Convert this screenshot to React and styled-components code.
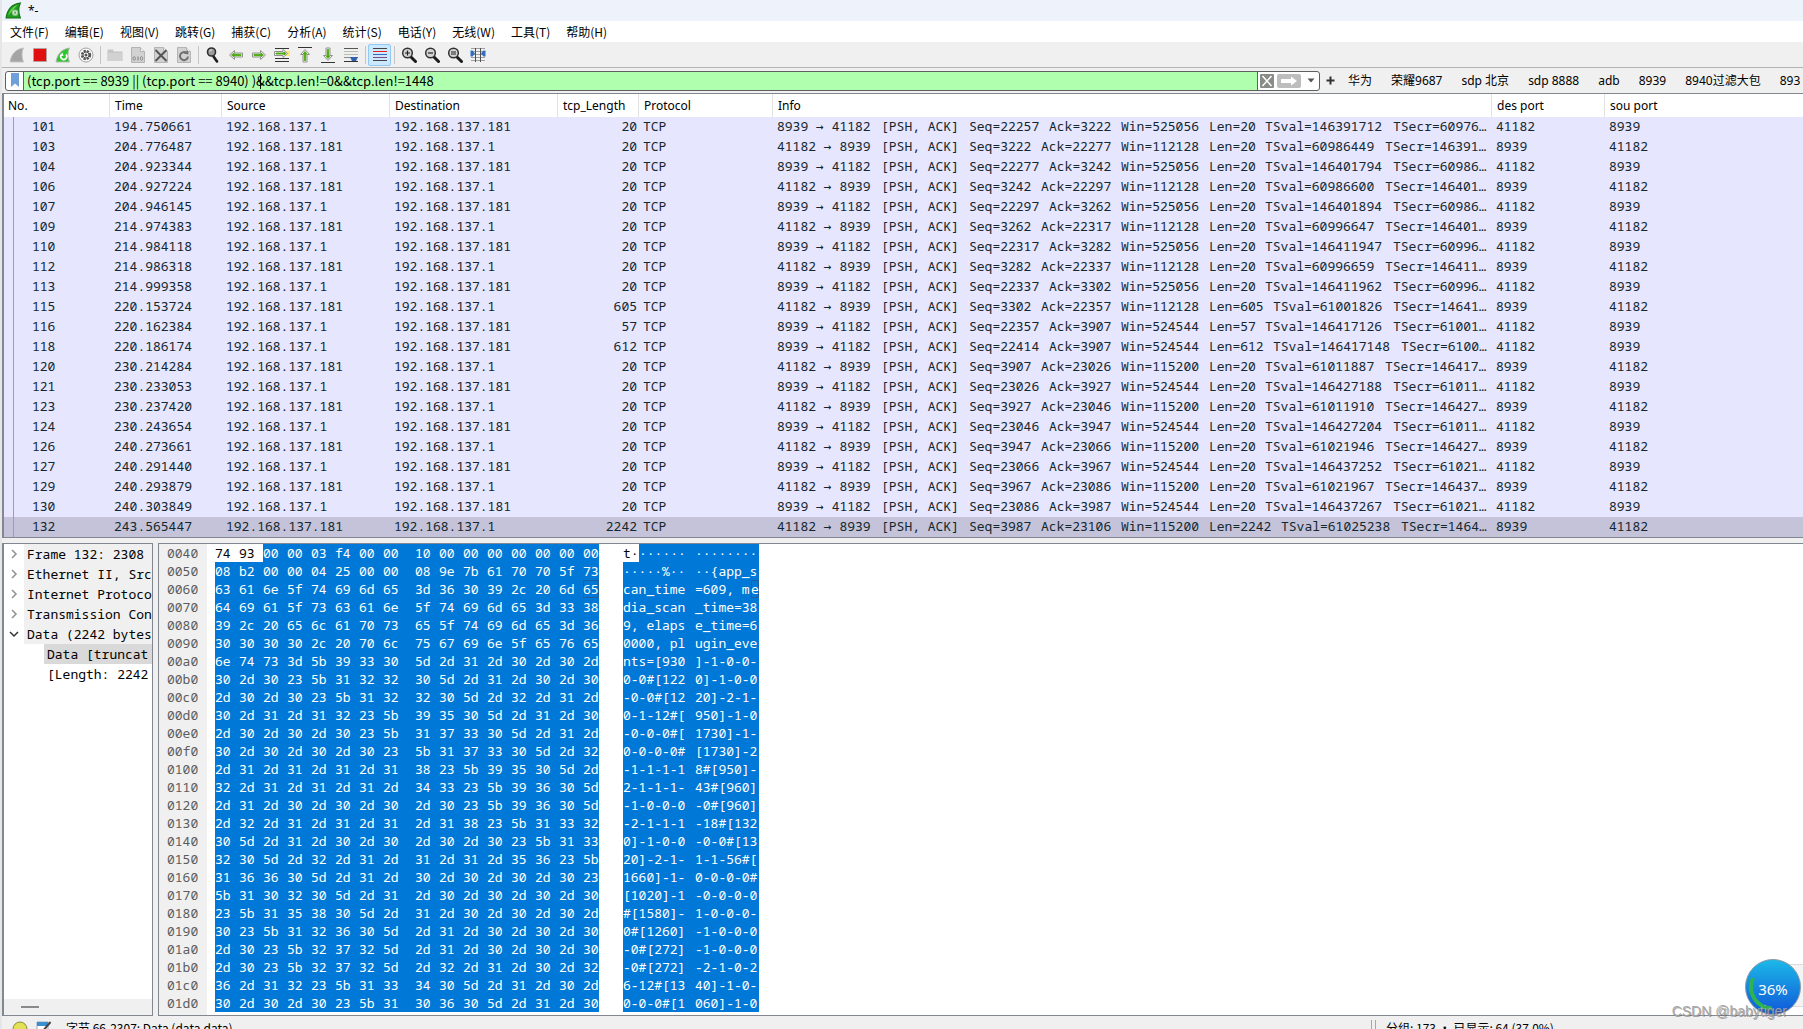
import React from "react";
import styled, { createGlobalStyle, css } from "styled-components";

const UI = '"Noto Sans", "Noto Sans CJK SC", sans-serif';
const CJK = '"Noto Sans CJK SC", "Noto Sans", sans-serif';
const MONO = '"Noto Sans Mono", "DejaVu Sans Mono", "Liberation Mono", monospace';
const EDGE = "#828790";
const FACE = "#f0f0f0";
const ACCENT = "#0078d7";

const GlobalStyle = createGlobalStyle`
  * { box-sizing: border-box; }
  body { margin: 0; background: ${FACE}; color: #000; font: 12px/16px ${UI}; overflow: hidden; }
  button, input { font: inherit; color: inherit; margin: 0; }
`;

const Window = styled.div`
  display: flex;
  flex-direction: column;
  height: 100vh;
  overflow: hidden;
  border-left: 2px solid #e4e6e8;
  position: relative;
`;

const TitleBar = styled.header`
  display: flex;
  align-items: center;
  gap: 6px;
  height: 21px;
  flex: none;
  padding-left: 3px;
  background: #edf2fb;
`;

const MenuBar = styled.nav`
  display: flex;
  gap: 16px;
  flex: none;
  height: 21px;
  padding-left: 8px;
  background: #fff;
  font-family: ${CJK};
`;

const MenuItem = styled.button`
  border: 0;
  padding: 0;
  background: none;
  line-height: 20px;
  white-space: nowrap;
`;

const ToolBar = styled.div`
  display: flex;
  align-items: center;
  flex: none;
  height: 26px;
  padding-left: 3px;
  border-bottom: 1px solid #b4b4b4;
`;

const ToolButton = styled.button`
  display: grid;
  place-items: center;
  width: 23px;
  height: 22px;
  padding: 0;
  border: 1px solid transparent;
  border-radius: 2px;
  background: none;
  ${(p) => p.$active && css`
    background: #cce8ff;
    border-color: #90c8f6;
  `}
`;

const ToolDivider = styled.span`
  width: 6px;
  height: 18px;
  background: linear-gradient(#c6c6c6, #c6c6c6) center / 1px 100% no-repeat;
`;

const FilterBar = styled.form`
  display: flex;
  align-items: center;
  flex: none;
  height: 25px;
  padding-left: 3px;
`;

const FilterBox = styled.div`
  display: flex;
  align-items: stretch;
  flex: 0 1 1315px;
  height: 20px;
  border: 1px solid #606060;
  border-radius: 3px;
  background: #fff;
  overflow: hidden;
`;

const FilterField = styled.div`
  flex: 1;
  display: flex;
  position: relative;
  border: solid #606060;
  border-width: 0 1px;
`;

const FilterInput = styled.input`
  flex: 1;
  min-width: 0;
  border: 0;
  outline: 0;
  padding: 0 0 0 3px;
  background: #afffaf;
  font: 13px/18px ${CJK};
`;

const Caret = styled.i`
  position: absolute;
  left: 236px;
  top: 2px;
  width: 1px;
  height: 15px;
  background: #000;
`;

const FilterButton = styled.button`
  display: grid;
  place-items: center;
  width: ${(p) => p.$w}px;
  padding: 0;
  border: 0;
  background: none;
`;

const SavedFilters = styled.div`
  display: flex;
  flex: 1 0 0;
  min-width: 0;
  gap: 19px;
  overflow: hidden;
  padding-left: 8px;
`;

const SavedFilter = styled.button`
  border: 0;
  padding: 0;
  background: none;
  white-space: nowrap;
  line-height: 20px;
  flex: none;
`;

const PacketPane = styled.section`
  flex: none;
  border: solid ${EDGE};
  border-width: 1px 0 1px 2px;
  background: #fff;
`;

const PacketTable = styled.table`
  width: 100%;
  table-layout: fixed;
  border-collapse: separate;
  border-spacing: 0;
`;

const HeadCell = styled.th`
  height: 23px;
  padding: 0 0 0 5px;
  border-right: 1px solid #e2e2e2;
  text-align: left;
  font: 12px/22px ${UI};
  white-space: nowrap;
  &:first-child { padding-left: 4px; }
  &:last-child { border-right: 0; }
`;

const PacketRow = styled.tr`
  background: ${(p) => (p.$selected ? "#c5c3d9" : "#e7e6ff")};
  color: #12272e;
  font: 13px/18px ${MONO};
`;

const Cell = styled.td`
  height: 20px;
  padding: 0 0 2px 4px;
  overflow: hidden;
  white-space: nowrap;
  text-align: ${(p) => (p.$right ? "right" : "left")};
  ${(p) => p.$right && css`padding-right: 2px;`}
`;

const NumberCell = styled(Cell)`
  padding-left: 28px;
  background: linear-gradient(#9c9cab, #9c9cab) 9px 0 / 1px 100% no-repeat;
`;

const Field = styled.span`
  display: inline-block;
  height: 18px;
  vertical-align: top;
  width: ${(p) => p.$chars * 8}px;
  white-space: pre;
`;

const ArrowSign = styled.span`
  font-family: "DejaVu Sans Mono", monospace;
  line-height: 1;
`;

const Panes = styled.div`
  display: flex;
  gap: 5px;
  flex: none;
  padding-top: 5px;
`;

const TreePane = styled.section`
  display: flex;
  flex-direction: column;
  flex: none;
  width: 151px;
  overflow: hidden;
  border: solid ${EDGE};
  border-width: 1px 1px 1px 2px;
  background: #fff;
`;

const Tree = styled.ul`
  flex: 1;
  margin: 0;
  padding: 0;
  list-style: none;
  font: 13px/20px ${MONO};
`;

const TreeItem = styled.li`
  display: flex;
  white-space: pre;
  height: 20px;
  padding-left: ${(p) => (p.$child ? 40 : 0)}px;
`;

const Twisty = styled.span`
  display: grid;
  place-items: center;
  width: 20px;
  flex: none;
`;

const TreeLabel = styled.span`
  flex: 1;
  padding-left: 3px;
  background: ${(p) => p.$bg};
`;

const TreeScroll = styled.div`
  height: 16px;
  padding: 7px 0 0 17px;
  background: ${FACE};
  &::before { content: ""; display: block; width: 18px; height: 2px; background: #8a8a8a; }
`;

const BytesPane = styled.section`
  flex: 1;
  min-width: 0;
  display: flex;
  border: solid ${EDGE};
  border-width: 1px 0 1px 1px;
  padding-bottom: 3px;
  background: #fff;
  font: 13px/18px ${MONO};
`;

const Offsets = styled.div`
  width: 48px;
  margin-bottom: -3px;
  padding-left: 8px;
  background: ${FACE};
  color: #5c5c5c;
`;

const HexColumn = styled.div`
  margin-left: 8px;
`;

const HexLine = styled.div`
  display: flex;
  height: 18px;
`;

const lit = css`
  background: ${(p) => (p.$plain ? "#fff" : ACCENT)};
  color: ${(p) => (p.$plain ? "#000" : "#fff")};
`;

const HexByte = styled.span`
  width: ${(p) => p.$w}px;
  ${lit}
  ${(p) => p.$hover && css`box-shadow: inset 0 0 0 1px #1d5f9a;`}
`;

const AsciiColumn = styled.div`
  margin-left: 24px;
`;

const AsciiRun = styled.span`
  width: ${(p) => p.$chars * 8}px;
  white-space: pre;
  ${lit}
  ${(p) => p.$hover && css`box-shadow: inset 0 0 0 1px #1d5f9a;`}
`;

const StatusBar = styled.footer`
  display: flex;
  flex: none;
  height: 25px;
  font: 12px/24px ${CJK};
  white-space: nowrap;
`;

const StatusIcons = styled.div`
  display: flex;
  gap: 8px;
  align-items: center;
  width: 64px;
  padding-left: 10px;
`;

const StatusText = styled.span`
  flex: 1;
`;

const StatusCounts = styled.span`
  width: 432px;
  padding-left: 15px;
  background:
    linear-gradient(#a8a8a8, #a8a8a8) 0 4px / 1px 18px no-repeat,
    linear-gradient(#a8a8a8, #a8a8a8) 4px 4px / 1px 18px no-repeat;
`;

const Meter = styled.div`
  position: absolute;
  right: 2px;
  bottom: 14px;
  width: 56px;
  height: 56px;
`;

const MeterTab = styled.div`
  position: absolute;
  right: 0;
  bottom: 22px;
  width: 20px;
  height: 43px;
  border: 1px solid #dcdcdc;
  border-right: 0;
  background: #f4f4f4;
`;

const MeterValue = styled.span`
  position: absolute;
  inset: 0;
  padding-top: 2px;
  text-align: center;
  color: #fff;
  font: 15px/56px ${UI};
`;

const Watermark = styled.span`
  position: absolute;
  right: 16px;
  bottom: 9px;
  color: rgba(165, 165, 165, 0.95);
  text-shadow: 1px 1px 0 rgba(90, 90, 90, 0.5);
  font: 14px/18px "Liberation Sans", sans-serif;
`;

/* ---------- icons ---------- */

const Svg = ({ s = 16, children, ...rest }) => (
  <svg width={s} height={s} viewBox="0 0 16 16" fill="none" aria-hidden="true" {...rest}>{children}</svg>
);

const FIN = "M1 15C2 8 6 2 14.5 1C12.5 5 12.5 10 14.5 15Z";

const Fin = ({ fill, edge }) => <Svg><path d={FIN} fill={fill} stroke={edge} /></Svg>;

const Logo = () => (
  <Svg s={17}>
    <path d={FIN} fill="#1f9a1f" stroke="#127012" />
    <path d="M3 13C4 8 7 4 12 2.500C9 6 6 9 3 13Z" fill="#5fd14a" />
    <circle cx="9.500" cy="10" r="2.500" fill="#d8efd4" stroke="#8fc48a" />
    <circle cx="9.500" cy="10" r="1" fill="#5a9a58" />
  </Svg>
);

const Restart = () => (
  <Svg>
    <path d={FIN} fill="#2fc52f" stroke="#b5bdb5" />
    <path d="M6.500 7.500A3 3 0 1 0 11 7.500" stroke="#fff" strokeWidth="1.600" />
    <path d="M5 8.500L7.500 5.500L8.500 9Z" fill="#fff" />
  </Svg>
);

const Gear = () => (
  <Svg>
    <circle cx="8" cy="8" r="7" fill="#fff" stroke="#a0a0a0" />
    <circle cx="8" cy="8" r="4" fill="#fff" stroke="#555" strokeWidth="2.400" strokeDasharray="2.200 1" />
    <circle cx="8" cy="8" r="3" fill="#fff" stroke="#555" />
    <circle cx="8" cy="8" r="1.500" fill="#555" />
  </Svg>
);

const Folder = () => (
  <Svg>
    <path d="M0.500 2.500H6L7 4.500H15.500V14H0.500Z" fill="#c6c6c6" />
    <path d="M0.500 6H15.500V14H0.500Z" fill="#d2d2d2" />
  </Svg>
);

const Doc = ({ children }) => (
  <Svg>
    <path d="M1.500 0.500H10.500L14.500 4.500V15.500H1.500Z" fill="#d2d2d2" stroke="#b4b4b4" />
    <path d="M10.500 0.500V4.500H14.500" fill="#f2f2f2" stroke="#b4b4b4" />
    {children}
  </Svg>
);

const SaveDoc = () => (
  <Doc>
    <ellipse cx="4.200" cy="11.500" rx="1.200" ry="1.800" stroke="#8a8a8a" />
    <path d="M8 9.500V13.500" stroke="#8a8a8a" strokeWidth="1.200" />
    <ellipse cx="11.500" cy="11.500" rx="1.200" ry="1.800" stroke="#8a8a8a" />
  </Doc>
);

const CloseDoc = () => <Doc><path d="M2.500 3L13.500 14M13.500 3L2.500 14" stroke="#555" strokeWidth="2" /></Doc>;

const ReloadDoc = () => (
  <Doc>
    <path d="M10.500 6A4 4 0 1 0 12 9.500" stroke="#707070" strokeWidth="2" />
    <path d="M8 6.500L12.500 7.500L12 3Z" fill="#707070" />
  </Doc>
);

const Lens = ({ mark }) => (
  <Svg>
    <path d="M9.500 9.500L14.500 14.500" stroke="#1c1c1c" strokeWidth="3" strokeLinecap="round" />
    <circle cx="6.500" cy="6" r="4.800" fill="#d4d4d4" stroke="#303030" strokeWidth="1.500" />
    <path d={mark} stroke="#202020" strokeWidth="1.200" />
  </Svg>
);

const Find = () => (
  <Svg>
    <path d="M8.500 9.500L12 14.500" stroke="#1c1c1c" strokeWidth="2.600" strokeLinecap="round" />
    <circle cx="6.500" cy="5" r="4" fill="#9c9c9c" stroke="#303030" strokeWidth="1.600" />
    <path d="M4.500 4.500A2 2 0 0 1 7 3" stroke="#eee" />
  </Svg>
);

const ARROW = "M1.500 8L6.500 3.500V6H14.500V10H6.500V12.500Z";

const Arrow = ({ turn }) => (
  <Svg>
    <g transform={`rotate(${turn} 8 8)`}>
      <path d={ARROW} fill="#fff" stroke="#909090" />
      <path d="M3.500 8L6 6V7.300H13V8.700H6V10Z" fill="#4faa10" stroke="#4faa10" />
    </g>
  </Svg>
);

const GoTo = () => (
  <Svg>
    <path d="M1 1.500H15M1 11.500H15M1 14.500H15" stroke="#333" />
    <path d="M9 4H16V9H9Z" fill="#ffe873" />
    <path d="M13.500 6.500L9 2.500V4.500H0.500V8.500H9V10.500Z" fill="#fff" stroke="#909090" />
    <path d="M12 6.500L10 5V6H2V7H10V8Z" fill="#4faa10" stroke="#4faa10" />
  </Svg>
);

const Limit = ({ bottom }) => (
  <Svg>
    <path d={bottom ? "M1 15.500H15" : "M1 0.500H15"} stroke="#333" />
    <g transform={bottom ? "rotate(180 8 8)" : undefined}>
      <path d="M8 2.500L12.500 7.500H10V15H6V7.500H3.500Z" fill="#fff" stroke="#909090" />
      <path d="M8 4.500L10 7H8.700V13.500H7.300V7H6Z" fill="#4faa10" stroke="#4faa10" />
    </g>
  </Svg>
);

const AutoScroll = () => (
  <Svg>
    <path d="M1 1.500H15" stroke="#555" />
    <path d="M1 4.500H15M1 7.500H15" stroke="#b8c0b0" />
    <path d="M1 10.500H15" stroke="#888" />
    <path d="M1 14.500H15" stroke="#333" />
    <path d="M7 10H15L13 14H9Z" fill="#2f62ad" />
  </Svg>
);

const Colorize = () => (
  <Svg>
    <path d="M1 1.500H15" stroke="#444" />
    <path d="M1 4.500H15" stroke="#f02020" />
    <path d="M1 7.500H15" stroke="#3a67b8" />
    <path d="M1 10.500H15" stroke="#7d4a86" />
    <path d="M1 13.500H15" stroke="#444" />
  </Svg>
);

const Columns = () => (
  <Svg>
    <path d="M1 1.500H15M1 4.500H15M1 7.500H15M1 10.500H15M1 13.500H15" stroke="#a0a0a0" />
    <path d="M5.500 1V15M10.500 1V15" stroke="#505050" />
    <path d="M0.500 3.500H2.500L5 6.500L2.500 9.500H0.500ZM15.500 3.500H13.500L11 6.500L13.500 9.500H15.500Z" fill="#2f6fc0" />
  </Svg>
);

const Stop = () => <Svg><path d="M1.500 1.500H14.500V14.500H1.500Z" fill="#e01010" stroke="#b9a0a0" /></Svg>;

const Bookmark = () => (
  <svg width="10" height="15" viewBox="0 0 10 15" aria-hidden="true"><path d="M1 0H9V14L5 10.500L1 14Z" fill="#6f9fd8" /></svg>
);

const ClearIcon = () => (
  <svg width="14" height="14" viewBox="0 0 14 14" aria-hidden="true">
    <rect width="14" height="14" rx="1" fill="#8a8c88" />
    <path d="M2.500 2L11.500 12M11.500 2L2.500 12" stroke="#fff" strokeWidth="1.500" />
  </svg>
);

const ApplyIcon = () => (
  <svg width="24" height="14" viewBox="0 0 24 14" aria-hidden="true">
    <rect width="24" height="14" rx="2" fill="#bdbdbd" />
    <path d="M4 5H14V2.500L20 7L14 11.500V9H4Z" fill="#fff" />
  </svg>
);

const CaretDown = () => <svg width="8" height="5" viewBox="0 0 8 5" aria-hidden="true"><path d="M0.500 0.500H7.500L4 4.500Z" fill="#555" /></svg>;

const PlusIcon = () => <svg width="9" height="9" viewBox="0 0 9 9" aria-hidden="true"><path d="M4.500 0.500V8.500M0.500 4.500H8.500" stroke="#333" strokeWidth="2" /></svg>;

const Chevron = ({ open }) => (
  <svg width="10" height="10" viewBox="0 0 10 10" fill="none" aria-hidden="true">
    <path d={open ? "M1 3L5 7L9 3" : "M3 1L7 5L3 9"} stroke={open ? "#333" : "#909090"} strokeWidth="1.500" />
  </svg>
);

/* ---------- data ---------- */

const MENUS = ["文件(F)", "编辑(E)", "视图(V)", "跳转(G)", "捕获(C)", "分析(A)", "统计(S)", "电话(Y)", "无线(W)", "工具(T)", "帮助(H)"];

const TOOLS = [
  ["开始捕获", <Fin fill="#a4a4a4" edge="#c4c4c4" />], ["停止捕获", <Stop />], ["重新开始", <Restart />], ["捕获选项", <Gear />], null,
  ["打开", <Folder />], ["保存", <SaveDoc />], ["关闭", <CloseDoc />], ["重新加载", <ReloadDoc />], null,
  ["查找", <Find />], ["上一个", <Arrow turn={0} />], ["下一个", <Arrow turn={180} />], ["转到分组", <GoTo />],
  ["首个分组", <Limit />], ["最后分组", <Limit bottom />], ["自动滚动", <AutoScroll />], null,
  ["着色", <Colorize />, true], null,
  ["放大", <Lens mark="M6.500 3.500V8.500M4 6H9" />], ["缩小", <Lens mark="M4 6H9" />], ["普通大小", <Lens mark="M4 5H9M4 7H9" />], ["调整列宽", <Columns />],
];

const SAVED = ["华为", "荣耀9687", "sdp 北京", "sdp 8888", "adb", "8939", "8940过滤大包", "893"];

const COLUMNS = [["No.", 106], ["Time", 112], ["Source", 168], ["Destination", 168], ["tcp_Length", 81], ["Protocol", 134], ["Info", 719], ["des port", 113], ["sou port"]];

/* no, time, sent by the phone, length, seq, ack, win, tsval, tsecr */
const PACKETS = [
  [101, "194.750661", 0, 20, 22257, 3222, 525056, "146391712", "60976"],
  [103, "204.776487", 1, 20, 3222, 22277, 112128, "60986449", "146391"],
  [104, "204.923344", 0, 20, 22277, 3242, 525056, "146401794", "60986"],
  [106, "204.927224", 1, 20, 3242, 22297, 112128, "60986600", "146401"],
  [107, "204.946145", 0, 20, 22297, 3262, 525056, "146401894", "60986"],
  [109, "214.974383", 1, 20, 3262, 22317, 112128, "60996647", "146401"],
  [110, "214.984118", 0, 20, 22317, 3282, 525056, "146411947", "60996"],
  [112, "214.986318", 1, 20, 3282, 22337, 112128, "60996659", "146411"],
  [113, "214.999358", 0, 20, 22337, 3302, 525056, "146411962", "60996"],
  [115, "220.153724", 1, 605, 3302, 22357, 112128, "61001826", "14641"],
  [116, "220.162384", 0, 57, 22357, 3907, 524544, "146417126", "61001"],
  [118, "220.186174", 0, 612, 22414, 3907, 524544, "146417148", "6100"],
  [120, "230.214284", 1, 20, 3907, 23026, 115200, "61011887", "146417"],
  [121, "230.233053", 0, 20, 23026, 3927, 524544, "146427188", "61011"],
  [123, "230.237420", 1, 20, 3927, 23046, 115200, "61011910", "146427"],
  [124, "230.243654", 0, 20, 23046, 3947, 524544, "146427204", "61011"],
  [126, "240.273661", 1, 20, 3947, 23066, 115200, "61021946", "146427"],
  [127, "240.291440", 0, 20, 23066, 3967, 524544, "146437252", "61021"],
  [129, "240.293879", 1, 20, 3967, 23086, 115200, "61021967", "146437"],
  [130, "240.303849", 0, 20, 23086, 3987, 524544, "146437267", "61021"],
  [132, "243.565447", 1, 2242, 3987, 23106, 115200, "61025238", "1464"],
];

const HEADER_BYTES = "74 93 00 00 03 f4 00 00 10 00 00 00 00 00 00 00 08 b2 00 00 04 25 00 00 08 9e 7b 61 70 70 5f 73".split(" ").map((h) => parseInt(h, 16));

const PAYLOAD =
  "can_time=609, media_scan_time=389, elapse_time=60000, plugin_events=[930]-1-0-0-" +
  "0-0#[1220]-1-0-0-0-0#[1220]-2-1-0-1-12#[950]-1-0-0-0-0#[1730]-1-0-0-0-0#[1730]-2" +
  "-1-1-1-18#[950]-2-1-1-1-43#[960]-1-0-0-0-0#[960]-2-1-1-1-18#[1320]-1-0-0-0-0#[13" +
  "20]-2-1-1-1-56#[1660]-1-0-0-0-0#[1020]-1-0-0-0-0#[1580]-1-0-0-0-0#[1260]-1-0-0-0" +
  "-0#[272]-1-0-0-0-0#[272]-2-1-0-26-12#[1340]-1-0-0-0-0#[1060]-1-0";

const BYTES = [...HEADER_BYTES, ...Array.from(PAYLOAD, (c) => c.charCodeAt(0))];
const LINES = Array.from({ length: BYTES.length / 16 }, (_, i) => BYTES.slice(i * 16, i * 16 + 16));
const START = 0x40;
const HOVER_LINE = 2;

const hex = (n, w) => n.toString(16).padStart(w, "0");
const glyph = (b) => (b >= 32 && b < 127 ? String.fromCharCode(b) : "·");
const byteWidth = (i) => (i === 15 ? 16 : i === 7 ? 32 : 24);

const Info = ({ ports, p }) => {
  const [, , , len, seq, ack, win, tsval, tsecr] = p;
  const parts = ["[PSH, ACK]", `Seq=${seq}`, `Ack=${ack}`, `Win=${win}`, `Len=${len}`, `TSval=${tsval}`];
  const last = `TSecr=${tsecr}…`;
  return (
    <>
      <Field $chars={13}>{ports[0]} <ArrowSign>→</ArrowSign> {ports[1]} </Field>
      {parts.map((t) => <Field key={t} $chars={t.length + 1}>{t + " "}</Field>)}
      <Field $chars={last.length}>{last}</Field>
    </>
  );
};

const Packet = ({ p }) => {
  const [no, time, fromPhone, len] = p;
  const ports = fromPhone ? ["41182", "8939"] : ["8939", "41182"];
  const hosts = fromPhone ? ["192.168.137.181", "192.168.137.1"] : ["192.168.137.1", "192.168.137.181"];
  return (
    <PacketRow $selected={no === 132}>
      <NumberCell>{no}</NumberCell>
      <Cell>{time}</Cell>
      <Cell>{hosts[0]}</Cell>
      <Cell>{hosts[1]}</Cell>
      <Cell $right>{len}</Cell>
      <Cell>TCP</Cell>
      <Cell><Info ports={ports} p={p} /></Cell>
      <Cell>{ports[1]}</Cell>
      <Cell>{ports[0]}</Cell>
    </PacketRow>
  );
};

const AsciiLine = ({ bytes, row }) => {
  const text = bytes.map(glyph).join("");
  if (row === 0) {
    return (
      <HexLine>
        <AsciiRun $plain $chars={2}>{text.slice(0, 2)}</AsciiRun>
        <AsciiRun $chars={7}>{text.slice(2, 8)}</AsciiRun>
        <AsciiRun $chars={8}>{text.slice(8)}</AsciiRun>
      </HexLine>
    );
  }
  const hover = row === HOVER_LINE;
  return (
    <HexLine>
      <AsciiRun $chars={9}>{text.slice(0, 8)}</AsciiRun>
      <AsciiRun $chars={hover ? 7 : 8}>{text.slice(8, hover ? 15 : 16)}</AsciiRun>
      {hover && <AsciiRun $chars={1} $hover>{text.slice(15)}</AsciiRun>}
    </HexLine>
  );
};

export default function App() {
  return (
    <>
      <GlobalStyle />
      <Window>
        <TitleBar><Logo /><span>*-</span></TitleBar>
        <MenuBar>{MENUS.map((m) => <MenuItem key={m}>{m}</MenuItem>)}</MenuBar>
        <ToolBar>
          {TOOLS.map((t, i) => t
            ? <ToolButton key={i} aria-label={t[0]} $active={t[2]}>{t[1]}</ToolButton>
            : <ToolDivider key={i} />)}
        </ToolBar>
        <FilterBar onSubmit={(e) => e.preventDefault()}>
          <FilterBox>
            <FilterButton type="button" $w={17} aria-label="书签"><Bookmark /></FilterButton>
            <FilterField>
              <FilterInput aria-label="显示过滤器" spellCheck={false} defaultValue="(tcp.port == 8939 || (tcp.port == 8940) )&&tcp.len!=0&&tcp.len!=1448" />
              <Caret />
            </FilterField>
            <FilterButton type="button" $w={18} aria-label="清除"><ClearIcon /></FilterButton>
            <FilterButton $w={26} aria-label="应用"><ApplyIcon /></FilterButton>
            <FilterButton type="button" $w={17} aria-label="最近"><CaretDown /></FilterButton>
          </FilterBox>
          <FilterButton type="button" $w={20} aria-label="添加"><PlusIcon /></FilterButton>
          <SavedFilters>{SAVED.map((s, i) => <SavedFilter type="button" key={i}>{s}</SavedFilter>)}</SavedFilters>
        </FilterBar>

        <PacketPane>
          <PacketTable>
            <colgroup>{COLUMNS.map(([name, w]) => <col key={name} width={w} />)}</colgroup>
            <thead><tr>{COLUMNS.map(([name]) => <HeadCell key={name}>{name}</HeadCell>)}</tr></thead>
            <tbody>{PACKETS.map((p) => <Packet key={p[0]} p={p} />)}</tbody>
          </PacketTable>
        </PacketPane>

        <Panes>
          <TreePane>
            <Tree>
              {["Frame 132: 2308", "Ethernet II, Src", "Internet Protoco", "Transmission Con"].map((t) => (
                <TreeItem key={t}><Twisty><Chevron /></Twisty><TreeLabel $bg={FACE}>{t}</TreeLabel></TreeItem>
              ))}
              <TreeItem><Twisty><Chevron open /></Twisty><TreeLabel $bg={FACE}>Data (2242 bytes</TreeLabel></TreeItem>
              <TreeItem $child><TreeLabel $bg="#d9d9d9">Data [truncat</TreeLabel></TreeItem>
              <TreeItem $child><TreeLabel>[Length: 2242</TreeLabel></TreeItem>
            </Tree>
            <TreeScroll />
          </TreePane>
          <BytesPane>
            <Offsets>{LINES.map((_, i) => <HexLine key={i}>{hex(START + i * 16, 4)}</HexLine>)}</Offsets>
            <HexColumn>
              {LINES.map((line, r) => (
                <HexLine key={r}>
                  {line.map((b, i) => (
                    <HexByte key={i} $w={byteWidth(i)} $plain={r === 0 && i < 2} $hover={r === HOVER_LINE && i === 15}>{hex(b, 2)}</HexByte>
                  ))}
                </HexLine>
              ))}
            </HexColumn>
            <AsciiColumn>{LINES.map((line, r) => <AsciiLine key={r} bytes={line} row={r} />)}</AsciiColumn>
          </BytesPane>
        </Panes>

        <StatusBar>
          <StatusIcons>
            <Svg><circle cx="8" cy="8" r="7" fill="#e3e055" stroke="#8c8a3c" /></Svg>
            <Svg>
              <path d="M1 1H12V15H1Z" fill="#fff" stroke="#9ab" />
              <path d="M1 1H12V5H1Z" fill="#3b8fd0" />
              <path d="M14.500 1L6 11" stroke="#444" strokeWidth="2" />
            </Svg>
          </StatusIcons>
          <StatusText>字节 66-2307: Data (data.data)</StatusText>
          <StatusCounts>分组: 173 · 已显示: 64 (37.0%)</StatusCounts>
        </StatusBar>

        <MeterTab />
        <Meter>
          <svg width="56" height="56" viewBox="0 0 56 56" fill="none" aria-hidden="true">
            <defs>
              <linearGradient id="ball" x1="0" y1="0" x2="0" y2="1">
                <stop offset="0" stopColor="#1cb9e8" />
                <stop offset="1" stopColor="#1057d8" />
              </linearGradient>
            </defs>
            <circle cx="28" cy="28" r="27.500" fill="url(#ball)" stroke="#8d9aa5" />
            <path d="M8 19A21.500 21.500 0 0 0 27 49.500" stroke="#2cb352" strokeWidth="4" />
          </svg>
          <MeterValue>36%</MeterValue>
        </Meter>
        <Watermark>CSDN @babytiger</Watermark>
      </Window>
    </>
  );
}
